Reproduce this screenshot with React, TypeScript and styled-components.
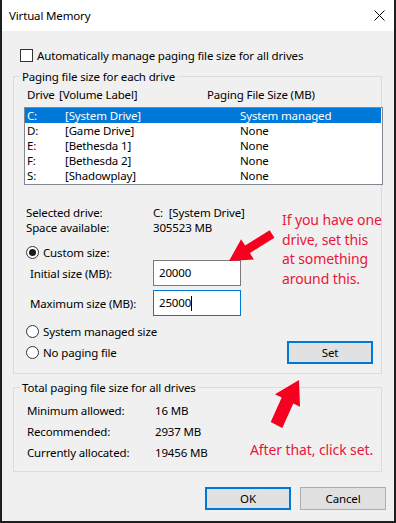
import React from "react";
import styled, { createGlobalStyle } from "styled-components";

const GlobalStyle = createGlobalStyle`
  html, body {
    margin: 0;
    padding: 0;
    background: #fff;
  }
  body {
    font-family: "Noto Sans", "Liberation Sans", sans-serif;
    font-size: 11.5px;
    letter-spacing: -0.15px;
    color: #000;
  }
`;

const Window = styled.div`
  position: relative;
  width: 396px;
  height: 523px;
  box-sizing: border-box;
  border: 2px solid #1e1e1e;
  border-top: 0;
  background: #f0f0f0;
  display: flex;
  flex-direction: column;
`;

const TitleBar = styled.div`
  height: 31px;
  flex: none;
  background: #fff;
  display: flex;
  align-items: center;
  justify-content: space-between;
  padding: 0 9px 0 7px;
`;

const Body = styled.div`
  flex: 1;
  display: flex;
  flex-direction: column;
  padding: 17px 8px 11px 11px;
`;

const CheckRow = styled.label`
  display: flex;
  align-items: center;
  gap: 4px;
  height: 15px;
  line-height: 15px;
  margin-left: 7px;
`;

const CheckBox = styled.span`
  width: 13px;
  height: 13px;
  box-sizing: border-box;
  border: 1px solid #333;
  background: #fff;
`;

const Group = styled.fieldset<{ $top: number }>`
  margin: ${(p) => p.$top}px 0 0 0;
  width: 369px;
  min-width: 0;
  box-sizing: border-box;
  border: 1px solid #dcdcdc;
  padding: 0;
`;

const Legend = styled.legend`
  margin-left: 6px;
  padding: 0 2px;
  line-height: 15px;
`;

const GroupInner = styled.div<{ $pad: string }>`
  padding: ${(p) => p.$pad};
  display: flex;
  flex-direction: column;
`;

const Header = styled.div`
  display: flex;
  line-height: 15px;
  padding-left: 3px;
  margin-bottom: 5px;
`;

const Cell = styled.span<{ $w?: number }>`
  width: ${(p) => (p.$w ? `${p.$w}px` : "auto")};
  flex: none;
  white-space: nowrap;
`;

const ListBox = styled.div`
  width: 359px;
  height: 78px;
  box-sizing: border-box;
  border: 1px solid #828790;
  background: #fff;
  padding: 0 1px 0 0;
`;

const ListRow = styled.div<{ $selected?: boolean }>`
  display: flex;
  height: 15px;
  line-height: 15px;
  padding-left: 2px;
  background: ${(p) => (p.$selected ? "#0078d7" : "transparent")};
  color: ${(p) => (p.$selected ? "#fff" : "#000")};
`;

const InfoBlock = styled.div`
  margin-top: 20px;
  padding-left: 2px;
`;

const InfoRow = styled.div<{ $gap?: number; $w: number }>`
  display: flex;
  line-height: 15px;
  margin-top: ${(p) => p.$gap ?? 0}px;

  & > span:first-child {
    width: ${(p) => p.$w}px;
    flex: none;
  }
`;

const RadioRow = styled.label<{ $top: number }>`
  display: flex;
  align-items: center;
  gap: 4px;
  height: 15px;
  line-height: 15px;
  padding-left: 2px;
  margin-top: ${(p) => p.$top}px;
`;

const Radio = styled.span<{ $on?: boolean }>`
  width: 13px;
  height: 13px;
  box-sizing: border-box;
  border: 1px solid #333;
  border-radius: 50%;
  background: #fff;
  display: flex;
  align-items: center;
  justify-content: center;

  &::after {
    content: "";
    width: 7px;
    height: 7px;
    border-radius: 50%;
    background: ${(p) => (p.$on ? "#1a1a1a" : "transparent")};
  }
`;

const SizeRow = styled.div<{ $top: number }>`
  display: flex;
  align-items: center;
  height: 26px;
  margin-top: ${(p) => p.$top}px;
  padding-left: 6px;

  & > span {
    width: 123px;
    flex: none;
  }
`;

const TextBox = styled.div<{ $focused?: boolean }>`
  width: 88px;
  height: 26px;
  box-sizing: border-box;
  border: 1px solid ${(p) => (p.$focused ? "#0078d7" : "#7a7a7a")};
  background: #fff;
  padding-left: 5px;
  line-height: 24px;
  display: flex;
  align-items: center;
`;

const Caret = styled.span`
  width: 1px;
  height: 15px;
  background: #000;
`;

const BottomRow = styled.div`
  display: flex;
  align-items: center;
  justify-content: space-between;
  margin-top: 2px;
  padding-right: 8px;
`;

const Button = styled.button<{ $default?: boolean }>`
  width: 86px;
  height: 23px;
  box-sizing: border-box;
  border: ${(p) => (p.$default ? "2px solid #0078d7" : "1px solid #adadad")};
  background: #e1e1e1;
  font: inherit;
  letter-spacing: inherit;
  color: #000;
  padding: 0;
`;

const Footer = styled.div`
  display: flex;
  justify-content: flex-end;
  gap: 9px;
  margin-top: 15px;
`;

const Note = styled.div<{ $left: number; $top: number }>`
  position: absolute;
  left: ${(p) => p.$left}px;
  top: ${(p) => p.$top}px;
  color: #e8163a;
  font-size: 14px;
  letter-spacing: -0.1px;
  line-height: 19.5px;
  white-space: nowrap;
`;

const ArrowLayer = styled.svg`
  position: absolute;
  left: -2px;
  top: 0;
  pointer-events: none;
`;

const drives = [
  { letter: "C:", label: "[System Drive]", size: "System managed" },
  { letter: "D:", label: "[Game Drive]", size: "None" },
  { letter: "E:", label: "[Bethesda 1]", size: "None" },
  { letter: "F:", label: "[Bethesda 2]", size: "None" },
  { letter: "S:", label: "[Shadowplay]", size: "None" },
];

const totals = [
  ["Minimum allowed:", "16 MB"],
  ["Recommended:", "2937 MB"],
  ["Currently allocated:", "19456 MB"],
];

const App = () => {
  return (
    <>
      <GlobalStyle />
      <Window>
        <TitleBar>
          <span>Virtual Memory</span>
          <svg width="11" height="11" viewBox="0 0 11 11">
            <path d="M0.5 0.5 L10.5 10.5 M10.5 0.5 L0.5 10.5" stroke="#000" strokeWidth="1" />
          </svg>
        </TitleBar>
        <Body>
          <CheckRow>
            <CheckBox />
            Automatically manage paging file size for all drives
          </CheckRow>

          <Group $top={6}>
            <Legend>Paging file size for each drive</Legend>
            <GroupInner $pad="3px 0 9px 10px">
              <Header>
                <Cell $w={32}>Drive</Cell>
                <Cell $w={148}>[Volume Label]</Cell>
                <Cell>Paging File Size (MB)</Cell>
              </Header>
              <ListBox>
                {drives.map((d, i) => (
                  <ListRow key={d.letter} $selected={i === 0}>
                    <Cell $w={38}>{d.letter}</Cell>
                    <Cell $w={175}>{d.label}</Cell>
                    <Cell>{d.size}</Cell>
                  </ListRow>
                ))}
              </ListBox>

              <InfoBlock>
                <InfoRow $w={127}>
                  <span>Selected drive:</span>
                  <span>C:&nbsp;&nbsp;[System Drive]</span>
                </InfoRow>
                <InfoRow $w={127}>
                  <span>Space available:</span>
                  <span>305523 MB</span>
                </InfoRow>
              </InfoBlock>

              <RadioRow $top={10}>
                <Radio $on />
                Custom size:
              </RadioRow>
              <SizeRow $top={0}>
                <span>Initial size (MB):</span>
                <TextBox>20000</TextBox>
              </SizeRow>
              <SizeRow $top={4}>
                <span>Maximum size (MB):</span>
                <TextBox $focused>
                  25000
                  <Caret />
                </TextBox>
              </SizeRow>
              <RadioRow $top={8}>
                <Radio />
                System managed size
              </RadioRow>
              <BottomRow>
                <RadioRow $top={0}>
                  <Radio />
                  No paging file
                </RadioRow>
                <Button $default>Set</Button>
              </BottomRow>
            </GroupInner>
          </Group>

          <Group $top={6}>
            <Legend>Total paging file size for all drives</Legend>
            <GroupInner $pad="8px 0 11px 13px">
              {totals.map(([k, v], i) => (
                <InfoRow key={k} $w={128} $gap={i === 0 ? 0 : 6}>
                  <span>{k}</span>
                  <span>{v}</span>
                </InfoRow>
              ))}
            </GroupInner>
          </Group>

          <Footer>
            <Button $default>OK</Button>
            <Button>Cancel</Button>
          </Footer>
        </Body>

        <Note $left={280} $top={210}>
          If you have one
          <br />
          drive, set this
          <br />
          at something
          <br />
          around this.
        </Note>
        <Note $left={248} $top={440}>
          After that, click set.
        </Note>

        <ArrowLayer width="396" height="523" viewBox="0 0 396 523">
          <polygon
            points="229,261 253.9,259.4 249.9,253.1 274.4,237.8 269.6,230.2 245.1,245.5 241.1,239.2"
            fill="#f5001f"
          />
          <polygon
            points="299,380 300,406.8 293.3,403.4 282.3,427.9 270.7,422.1 281.7,397.6 275,394.2"
            fill="#f5001f"
          />
        </ArrowLayer>
      </Window>
    </>
  );
};

export default App;
